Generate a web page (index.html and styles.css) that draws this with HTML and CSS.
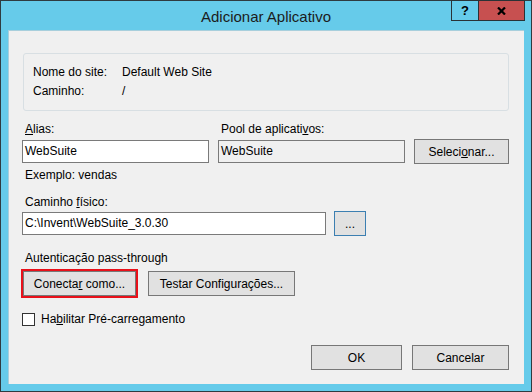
FILE: index.html
```html
<!DOCTYPE html>
<html lang="pt-BR">
<head>
    <meta charset="UTF-8">
    <title>Adicionar Aplicativo</title>
    <link rel="stylesheet" href="styles.css">
</head>
<body>
    <div class="window">
        <div class="titlebar">
            <span class="title">Adicionar Aplicativo</span>
        </div>
        <div class="caption-buttons">
            <span class="cap help">?</span>
            <span class="cap close">
                <svg width="9" height="8" viewBox="0 0 9 8">
                    <path d="M1 0.5 L8 7.5 M8 0.5 L1 7.5" stroke="#000" stroke-width="2.2" fill="none"/>
                </svg>
            </span>
        </div>

        <div class="client">
            <div class="groupbox">
                <div class="info-row"><span class="info-label">Nome do site:</span><span>Default Web Site</span></div>
                <div class="info-row"><span class="info-label">Caminho:</span><span>/</span></div>
            </div>

            <div class="alias-row">
                <div class="field">
                    <label class="label"><u>A</u>lias:</label>
                    <div class="textbox">WebSuite</div>
                </div>
                <div class="field">
                    <label class="label">Pool de aplicati<u>v</u>os:</label>
                    <div class="textbox readonly">WebSuite</div>
                </div>
                <button class="btn btn-select">Seleci<u>o</u>nar...</button>
            </div>

            <div class="label hint">Exemplo: vendas</div>

            <label class="label path-label">Caminho <u>f</u>ísico:</label>
            <div class="path-row">
                <div class="textbox path">C:\Invent\WebSuite_3.0.30</div>
                <button class="btn btn-browse">...</button>
            </div>

            <div class="label auth-label">Autenticação pass-through</div>
            <div class="auth-row">
                <button class="btn btn-connect">Conecta<u>r</u> como...</button>
                <button class="btn btn-test">Testar Configurações...</button>
            </div>

            <div class="check-row">
                <span class="checkbox"></span>
                <span>Ha<u>b</u>ilitar Pré-carregamento</span>
            </div>

            <div class="dialog-buttons">
                <button class="btn btn-ok">OK</button>
                <button class="btn btn-cancel">Cancelar</button>
            </div>
        </div>
    </div>
</body>
</html>
```

FILE: styles.css
```css
body {
    margin: 0;
    font-family: "Liberation Sans", Arial, sans-serif;
    font-size: 12px;
    color: #000;
}
.window {
    position: relative;
    width: 532px;
    height: 392px;
    box-sizing: border-box;
    border: 1px solid #2f3b40;
    background: #66cbea;
    padding: 0 7px 7px 7px;
}
.titlebar {
    height: 29px;
    display: flex;
    align-items: center;
    justify-content: center;
}
.title {
    font-size: 15px;
    color: #1c1c1c;
    margin-top: 2px;
}
.caption-buttons {
    position: absolute;
    top: -1px;
    right: 6px;
    display: flex;
}
.cap {
    height: 19px;
    border: 1px solid #2a3236;
    display: flex;
    align-items: center;
    justify-content: center;
}
.help {
    width: 26px;
    border-right: none;
    background: #66cbea;
    font-weight: bold;
    font-size: 13px;
}
.close {
    width: 45px;
    background: #c75050;
}
.client {
    height: 354px;
    box-sizing: border-box;
    background: #f0f0f0;
    border-top: 1px solid #a8cfdc;
    border-left: 1px solid #a8cfdc;
    padding: 22px 15px 0 13px;
}
.groupbox {
    margin-left: 1px;
    border: 1px solid #d8dfe3;
    border-radius: 3px;
    padding: 9px 9px 9px 9px;
}
.info-row {
    display: flex;
    line-height: 19px;
}
.info-label {
    width: 89px;
}
.label {
    display: block;
    line-height: 16px;
    padding-left: 3px;
}
u {
    text-underline-offset: 1px;
}
.alias-row {
    display: flex;
    margin-top: 10px;
    gap: 9px;
}
.field .label {
    margin-bottom: 3px;
}
.textbox {
    box-sizing: border-box;
    height: 23px;
    width: 187px;
    border: 1px solid #7a7a7a;
    background: #fff;
    padding-left: 2px;
    line-height: 21px;
}
.textbox.readonly {
    background: #f0f0f0;
}
.btn {
    box-sizing: border-box;
    height: 25px;
    border: 1px solid #777;
    background: #e1e1e1;
    font-family: inherit;
    font-size: 12px;
    color: #000;
    padding: 0;
}
.btn-select {
    width: 96px;
    align-self: flex-end;
    margin-bottom: -1px;
}
.hint {
    margin-top: 4px;
}
.path-label {
    margin-top: 11px;
    margin-bottom: 1px;
}
.path-row {
    display: flex;
    align-items: center;
    gap: 8px;
}
.textbox.path {
    width: 304px;
}
.btn-browse {
    width: 32px;
    border-color: #3c7fb1;
}
.auth-label {
    margin-top: 14px;
}
.auth-row {
    display: flex;
    gap: 12px;
    margin-top: 5px;
    padding-left: 1px;
}
.btn-connect {
    width: 113px;
    outline: 2px solid #e8101a;
}
.btn-test {
    width: 147px;
}
.check-row {
    display: flex;
    align-items: center;
    line-height: 16px;
    margin-top: 15px;
}
.checkbox {
    box-sizing: border-box;
    width: 13px;
    height: 13px;
    border: 1px solid #333;
    background: #fff;
    margin-right: 6px;
}
.dialog-buttons {
    display: flex;
    justify-content: flex-end;
    gap: 10px;
    margin-top: 18px;
}
.btn-ok {
    width: 91px;
}
.btn-cancel {
    width: 97px;
}
```
